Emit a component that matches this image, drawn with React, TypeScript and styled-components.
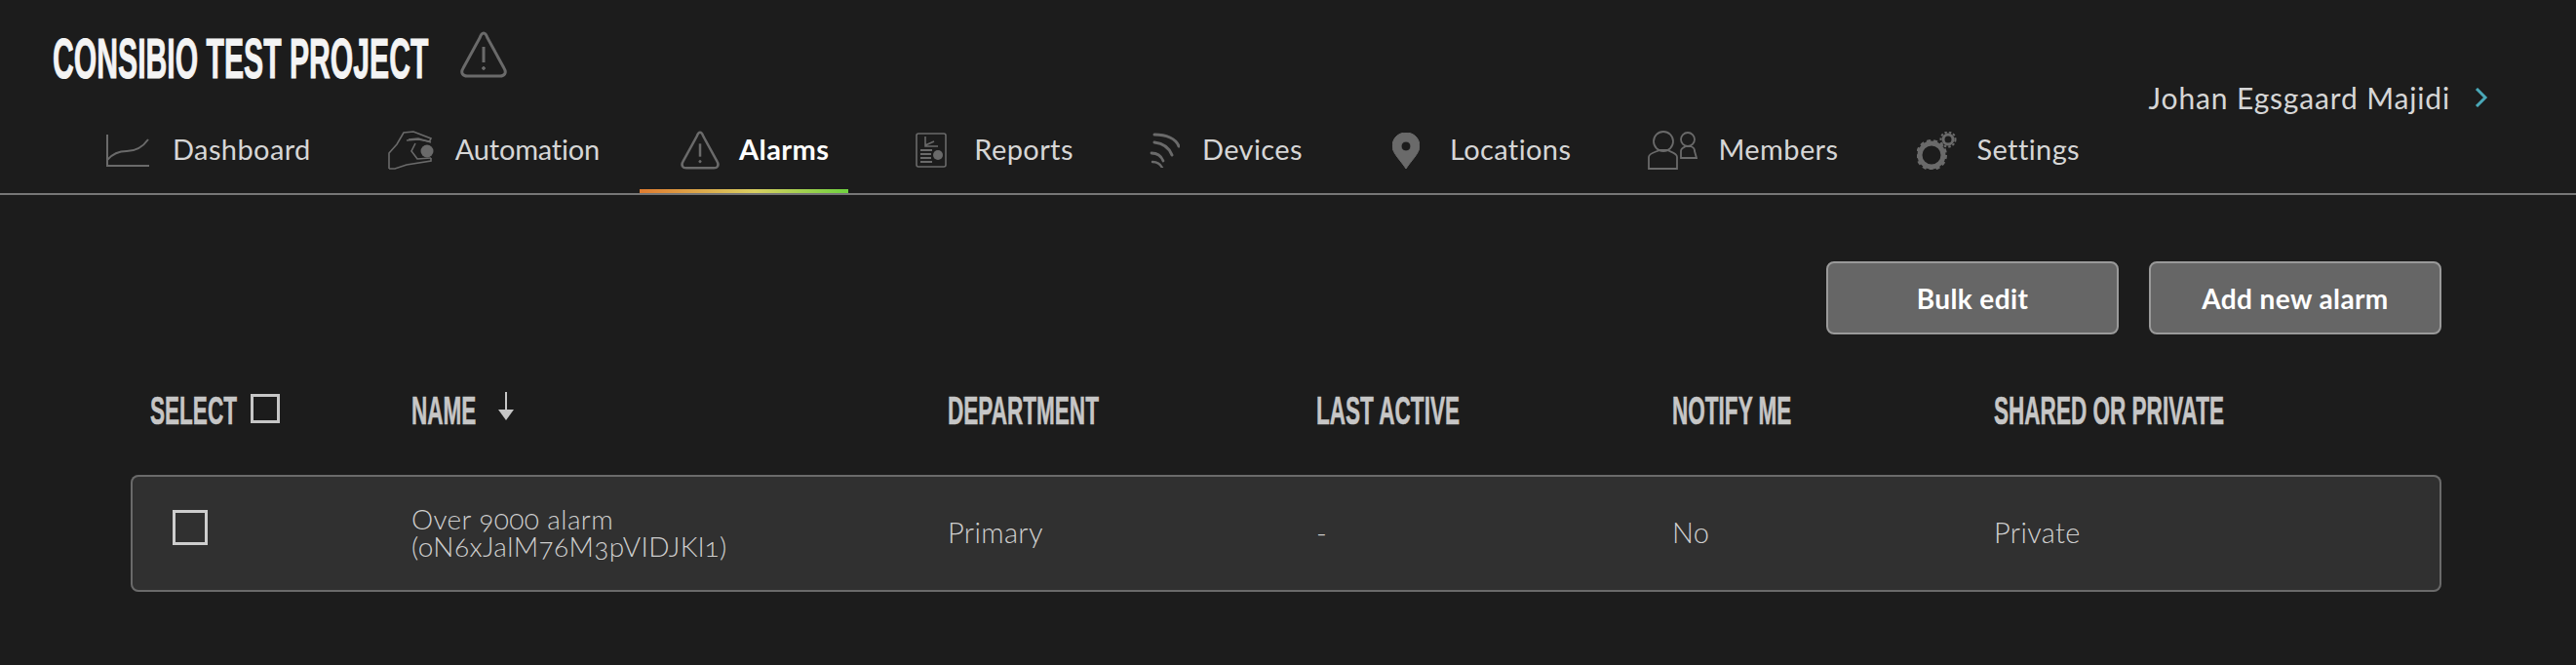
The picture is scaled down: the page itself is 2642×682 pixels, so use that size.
import styled, { createGlobalStyle } from "styled-components"

const GlobalStyle = createGlobalStyle`
  html, body {
    margin: 0;
    padding: 0;
    background: #1c1c1c;
    font-family: "Lato", "Liberation Sans", sans-serif;
  }
`

const Page = styled.div`
  width: 2642px;
  height: 682px;
  overflow: hidden;
  background: #1c1c1c;
`

const Header = styled.header`
  display: flex;
  justify-content: space-between;
  box-sizing: border-box;
  height: 200px;
  border-bottom: 2px solid #777;
`

const HeaderLeft = styled.div`
  display: flex;
  flex-direction: column;
  padding-top: 32px;
`

const TitleRow = styled.div`
  display: flex;
  align-items: center;
  gap: 29px;
  height: 48px;
  padding-left: 54px;
`

const Condensed = styled.span<{ $w: number; $scale?: number }>`
  display: inline-block;
  width: ${(p) => p.$w}px;
  white-space: nowrap;
  font-family: "Liberation Sans Narrow", "Liberation Sans", sans-serif;
  font-weight: 700;
  transform: scaleX(${(p) => p.$scale ?? 0.55});
  transform-origin: left center;
`

const Title = styled(Condensed)`
  padding-top: 8px;
  font-size: 58px;
  line-height: 48px;
  color: #f4f4f4;
  -webkit-text-stroke: 1px #f4f4f4;
`

const Nav = styled.nav`
  display: flex;
  gap: 21px;
  height: 88px;
  margin-top: auto;
  padding-left: 69px;
`

const NavItem = styled.a<{ $pl: number; $active?: boolean }>`
  position: relative;
  display: flex;
  align-items: center;
  padding: 0 20px 0 ${(p) => p.$pl}px;
  font-size: 29px;
  font-weight: ${(p) => (p.$active ? 700 : 400)};
  color: ${(p) => (p.$active ? "#fff" : "#d6d6d6")};
  white-space: nowrap;

  ${(p) =>
    p.$active &&
    `&::after {
      content: "";
      position: absolute;
      left: 0;
      right: 0;
      bottom: 0;
      height: 4px;
      background: linear-gradient(90deg, #e07c30, #d9cf62 55%, #6fd23f);
    }`}
`

const NavLabel = styled.span<{ $spacing: number }>`
  margin-top: -3px;
  letter-spacing: ${(p) => p.$spacing}px;
`

const NavIcon = styled.span<{ $gap: number }>`
  display: flex;
  margin-right: ${(p) => p.$gap}px;
`

const UserBlock = styled.div`
  display: flex;
  align-items: center;
  gap: 25px;
  height: 40px;
  margin-top: 80px;
  padding-right: 90px;
  font-size: 30px;
  letter-spacing: 0.85px;
  color: #d6d6d6;
  white-space: nowrap;
`

const Main = styled.main`
  padding: 68px 138px 0 134px;
`

const Actions = styled.div`
  display: flex;
  justify-content: flex-end;
  gap: 31px;
`

const ActionButton = styled.button`
  box-sizing: border-box;
  width: 300px;
  height: 75px;
  border: 2px solid #9a9a9a;
  border-radius: 8px;
  background: #666;
  color: #fff;
  font-family: inherit;
  font-size: 28px;
  font-weight: 700;
  letter-spacing: 0.4px;
`

const gridColumns = "288px 550px 378px 365px 330px 1fr"

const HeaderRow = styled.div`
  display: grid;
  grid-template-columns: ${gridColumns};
  align-items: center;
  height: 60px;
  margin: 48px 0 36px;
`

const HeaderCell = styled.div<{ $first?: boolean }>`
  display: flex;
  align-items: center;
  padding-left: ${(p) => (p.$first ? 20 : 0)}px;
`

const ColumnTitle = styled(Condensed)`
  font-size: 41px;
  line-height: 40px;
  color: #c6c6c6;
  -webkit-text-stroke: 0.6px #c6c6c6;
`

const HeaderCheck = styled.span`
  box-sizing: border-box;
  width: 30px;
  height: 30px;
  margin: -4px 0 0 17px;
  border: 3px solid #c6c6c6;
`

const SortArrow = styled.svg`
  margin: -10px 0 0 20px;
`

const AlarmRow = styled.div`
  display: grid;
  grid-template-columns: ${gridColumns};
  align-items: center;
  box-sizing: border-box;
  height: 120px;
  border-radius: 8px;
  background: #303030;
  box-shadow: inset 0 0 0 2px #6a6a6a;
`

const RowCheck = styled.span`
  box-sizing: border-box;
  width: 36px;
  height: 36px;
  margin: -12px 0 0 43px;
  border: 3px solid #cdcdcd;
`

const RowCell = styled.div`
  margin-top: -4px;
  font-size: 29px;
  font-weight: 300;
  letter-spacing: 0.35px;
  color: #cfcfcf;
`

const NameCell = styled(RowCell)`
  margin-top: -2px;
  font-size: 28px;
  letter-spacing: 0.4px;
  line-height: 28px;
  font-feature-settings: "onum";
`

const IconSvg = styled.svg`
  display: block;
  fill: none;
  stroke: #6a6a6a;
`

const AlertIcon = ({ w, h }: { w: number; h: number }) => (
  <IconSvg width={w} height={h} viewBox="0 0 50 48" strokeWidth="3">
    <path d="M25 2c2 0 3 2 4 5l17 31c3 5 0 8-4 8H8c-4 0-7-3-4-8L21 7c1-3 2-5 4-5z" />
    <path d="M25 16v16" />
    <circle cx="25" cy="38" r="1.4" fill="#6a6a6a" strokeWidth="1" />
  </IconSvg>
)

const DashboardIcon = () => (
  <IconSvg width="44" height="33" viewBox="0 0 44 33" strokeWidth="2">
    <path d="M1 0v32h43" />
    <path d="M1 26c6-7 12-9 20-9 10 0 17-5 22-12" />
  </IconSvg>
)

const AutomationIcon = () => (
  <IconSvg width="48" height="40" viewBox="0 0 48 40" strokeWidth="1.6">
    <path d="M1 39V23l8-9L16 2l10-1 18 7-1.5 3L31 9l-12 1" />
    <path d="M21 9l10-1 13 4" />
    <path d="M28 13l-4 8 6 8 14-1" />
    <path d="M44 28v3l-25 4-12 4H1" />
    <circle cx="40" cy="21" r="6.5" fill="#6a6a6a" stroke="none" />
  </IconSvg>
)

const ReportsIcon = () => (
  <IconSvg width="32" height="36" viewBox="0 0 32 36" strokeWidth="1.6">
    <rect x="1" y="1" width="30" height="34" rx="2" />
    <path d="M10 4v10h13M10 13l9-4" />
    <path d="M5 18h12M5 22h11M5 26h11M5 30h12" strokeWidth="1.8" />
    <circle cx="23" cy="23" r="5" fill="#6a6a6a" stroke="none" />
  </IconSvg>
)

const DevicesIcon = () => (
  <IconSvg width="31" height="36" viewBox="0 0 31 36" strokeLinecap="round">
    <path d="M5 2c12 0 22 4 25 12" strokeWidth="3" />
    <path d="M5 10c8 1 15 5 18 13" strokeWidth="3" />
    <path d="M2 21c6 0 10 3 12 8" strokeWidth="2.8" />
    <path d="M3 30c5 0 8 2 10 6" strokeWidth="2.4" />
  </IconSvg>
)

const LocationsIcon = () => (
  <IconSvg width="28" height="37" viewBox="0 0 28 37" stroke="none">
    <path
      fill="#6a6a6a"
      fillRule="evenodd"
      d="M14 0c8 0 14 6 14 14 0 7-9 15-14 23C9 29 0 21 0 14 0 6 6 0 14 0zm0 9a5 5 0 100 10 5 5 0 000-10z"
    />
  </IconSvg>
)

const MembersIcon = () => (
  <IconSvg width="51" height="40" viewBox="0 0 51 40" strokeWidth="1.8">
    <ellipse cx="16" cy="11" rx="10" ry="10" />
    <path d="M1 39V27c0-4 7-5 11-7h8c4 2 10 3 10 7v12z" />
    <circle cx="41" cy="9" r="7" />
    <path d="M34 28v-7c0-3 3-4 5-5h5c3 1 4 2 4 5l2 7z" />
  </IconSvg>
)

const SettingsIcon = () => (
  <IconSvg width="41" height="39" viewBox="0 0 41 39">
    <circle cx="15" cy="24" r="12" strokeWidth="5" />
    <circle cx="15" cy="24" r="14.5" strokeWidth="3" strokeDasharray="4 3" />
    <circle cx="32" cy="8" r="5" strokeWidth="3" />
    <circle cx="32" cy="8" r="7.5" strokeWidth="2" strokeDasharray="2.5 2" />
  </IconSvg>
)

const navItems = [
  { label: "Dashboard", icon: <DashboardIcon />, pl: 40, gap: 24, spacing: 0.4 },
  { label: "Automation", icon: <AutomationIcon />, pl: 38, gap: 21, spacing: -0.2 },
  { label: "Alarms", icon: <AlertIcon w={42} h={40} />, pl: 41, gap: 19, spacing: 0.4 },
  { label: "Reports", icon: <ReportsIcon />, pl: 48, gap: 28, spacing: 0.4 },
  { label: "Devices", icon: <DevicesIcon />, pl: 37, gap: 23, spacing: 0.4 },
  { label: "Locations", icon: <LocationsIcon />, pl: 51, gap: 31, spacing: 0.4 },
  { label: "Members", icon: <MembersIcon />, pl: 38, gap: 21, spacing: 0.4 },
  { label: "Settings", icon: <SettingsIcon />, pl: 40, gap: 20, spacing: 0.4 },
]

export default function App() {
  return (
    <Page>
      <GlobalStyle />
      <Header>
        <HeaderLeft>
          <TitleRow>
            <Title $w={388} $scale={0.52}>
              CONSIBIO TEST PROJECT
            </Title>
            <AlertIcon w={50} h={48} />
          </TitleRow>
          <Nav>
            {navItems.map((item) => (
              <NavItem key={item.label} $pl={item.pl} $active={item.label === "Alarms"}>
                <NavIcon $gap={item.gap}>{item.icon}</NavIcon>
                <NavLabel $spacing={item.spacing}>{item.label}</NavLabel>
              </NavItem>
            ))}
          </Nav>
        </HeaderLeft>
        <UserBlock>
          Johan Egsgaard Majidi
          <svg width="14" height="20" viewBox="0 0 14 20" fill="none" stroke="#4aa8b8" strokeWidth="3">
            <path d="M2 1l9 9-9 9" />
          </svg>
        </UserBlock>
      </Header>
      <Main>
        <Actions>
          <ActionButton>Bulk edit</ActionButton>
          <ActionButton>Add new alarm</ActionButton>
        </Actions>
        <HeaderRow>
          <HeaderCell $first>
            <ColumnTitle $w={86}>SELECT</ColumnTitle>
            <HeaderCheck />
          </HeaderCell>
          <HeaderCell>
            <ColumnTitle $w={68}>NAME</ColumnTitle>
            <SortArrow width="18" height="29" viewBox="0 0 18 29">
              <path d="M9 0v20" stroke="#c6c6c6" strokeWidth="2" />
              <path d="M1 18h16l-8 11z" fill="#c6c6c6" />
            </SortArrow>
          </HeaderCell>
          <HeaderCell>
            <ColumnTitle $w={157}>DEPARTMENT</ColumnTitle>
          </HeaderCell>
          <HeaderCell>
            <ColumnTitle $w={149}>LAST ACTIVE</ColumnTitle>
          </HeaderCell>
          <HeaderCell>
            <ColumnTitle $w={125}>NOTIFY ME</ColumnTitle>
          </HeaderCell>
          <HeaderCell>
            <ColumnTitle $w={236}>SHARED OR PRIVATE</ColumnTitle>
          </HeaderCell>
        </HeaderRow>
        <AlarmRow>
          <RowCheck />
          <NameCell>
            Over 9000 alarm
            <br />
            (oN6xJalM76M3pVIDJKl1)
          </NameCell>
          <RowCell>Primary</RowCell>
          <RowCell>-</RowCell>
          <RowCell>No</RowCell>
          <RowCell>Private</RowCell>
        </AlarmRow>
      </Main>
    </Page>
  )
}
